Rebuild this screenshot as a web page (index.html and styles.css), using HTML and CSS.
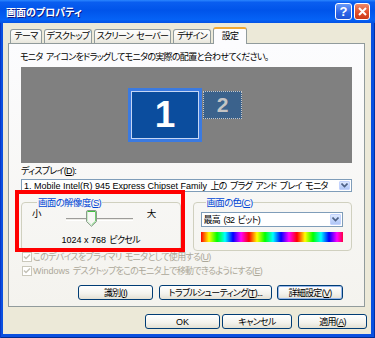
FILE: index.html
```html
<!DOCTYPE html>
<html>
    <head>
        <meta charset="utf-8">
        <title>画面のプロパティ</title>
        <link rel="stylesheet" href="styles.css">
    </head>
    <body>
        <div id="window">
            <div id="titleBar">
                <span class="title">画面のプロパティ</span>
                <span class="titleBtn help">?</span>
                <span class="titleBtn close">
                    <svg width="9" height="9" viewBox="0 0 9 9"><path d="M1 1L8 8M8 1L1 8" stroke="#fff" stroke-width="2"/></svg>
                </span>
            </div>
            <div id="client">
                <ul id="tabs">
                    <li class="t1">テーマ</li>
                    <li class="t2">デスクトップ</li>
                    <li class="t3">スクリーン セーバー</li>
                    <li class="t4">デザイン</li>
                    <li class="t5 active">設定</li>
                </ul>
                <div id="panel">
                    <p class="hint">モニタ アイコンをドラッグしてモニタの実際の配置と合わせてください。</p>
                    <div id="monitors">
                        <div class="monitor one"><span>1</span></div>
                        <div class="monitor two"><span>2</span></div>
                    </div>
                    <p class="label">ディスプレイ(<u>D</u>):</p>
                    <div class="combo display">
                        <span class="value"><span class="en">1. Mobile Intel(R) 945 Express Chipset Family</span> 上の プラグ アンド プレイ モニタ</span>
                        <span class="arrow"><svg width="7" height="5" viewBox="0 0 7 5"><path d="M0.5 0.5L3.5 3.5L6.5 0.5" fill="none" stroke="#4d6185" stroke-width="1.6"/></svg></span>
                    </div>
                    <div id="groups">
                        <fieldset class="group res">
                            <legend>画面の解像度(<u>S</u>)</legend>
                            <div class="sliderRow">
                                <span class="end">小</span>
                                <div class="slider">
                                    <div class="track"></div>
                                    <svg class="thumb" width="11" height="17" viewBox="0 0 11 17">
                                        <path d="M0.5 2Q0.5 0.5 2 0.5H9Q10.5 0.5 10.5 2V11.5L5.5 16.3L0.5 11.5Z" fill="#f7f7f4" stroke="#8a9a8a"/>
                                        <path d="M1.5 1.5H9.5" stroke="#3fbf3f"/>
                                        <path d="M9.5 2V11.2L5.5 15" fill="none" stroke="#6fcf6f"/>
                                        <path d="M1.5 2V11.2L5.5 15" fill="none" stroke="#c8eec8"/>
                                    </svg>
                                </div>
                                <span class="end">大</span>
                            </div>
                            <p class="resText"><span class="en">1024 x 768</span> ピクセル</p>
                        </fieldset>
                        <fieldset class="group color">
                            <legend>画面の色(<u>C</u>)</legend>
                            <div class="combo colorDepth">
                                <span class="value">最高 (32 ビット)</span>
                                <span class="arrow"><svg width="7" height="5" viewBox="0 0 7 5"><path d="M0.5 0.5L3.5 3.5L6.5 0.5" fill="none" stroke="#4d6185" stroke-width="1.6"/></svg></span>
                            </div>
                            <div class="rainbow"></div>
                        </fieldset>
                    </div>
                    <div class="check">
                        <span class="box"><svg width="8" height="8" viewBox="0 0 8 8"><path d="M1 3.5L3 5.5L7 1.5" fill="none" stroke="#c4c2b6" stroke-width="1.5"/></svg></span>
                        <span>このデバイスをプライマリ モニタとして使用する(<u>U</u>)</span>
                    </div>
                    <div class="check second">
                        <span class="box"><svg width="8" height="8" viewBox="0 0 8 8"><path d="M1 3.5L3 5.5L7 1.5" fill="none" stroke="#c4c2b6" stroke-width="1.5"/></svg></span>
                        <span><span class="en">Windows</span> デスクトップをこのモニタ上で移動できるようにする(<u>E</u>)</span>
                    </div>
                    <div class="buttons panelButtons">
                        <button class="b1">識別(<u>I</u>)</button>
                        <button class="b2">トラブルシューティング(<u>T</u>)...</button>
                        <button class="b3 focus">詳細設定(<u>V</u>)</button>
                    </div>
                </div>
                <div class="buttons dialogButtons">
                    <button class="ok"><span class="en">OK</span></button>
                    <button class="cancel">キャンセル</button>
                    <button class="apply">適用(<u>A</u>)</button>
                </div>
            </div>
            <div id="mark"></div>
        </div>
    </body>
</html>
```

FILE: styles.css
```css
*{
    margin: 0px;
    padding: 0px;
    box-sizing: border-box;
}
body{
    width: 375px;
    height: 338px;
    overflow: hidden;
    font-family: "Liberation Sans", "Noto Sans CJK JP", sans-serif;
    font-size: 9px;
    font-feature-settings: "palt";
    letter-spacing: -0.7px;
    word-spacing: 1.5px;
    white-space: nowrap;
    color: #000;
}
.en{
    letter-spacing: 0px;
    word-spacing: 0px;
}
#window{
    position: relative;
    width: 375px;
    height: 338px;
    display: flex;
    flex-direction: column;
    background-color: #0a50e0;
    box-shadow: inset 1px 0 #0838c8, inset -1px 0 #0030a8, inset 0 -1px #002a90;
}
#titleBar{
    height: 23px;
    display: flex;
    align-items: center;
    padding: 0 5px 0 6px;
    background: linear-gradient(180deg, #2b86ff 0, #0a5ef0 10%, #0054ea 45%, #0562f6 85%, #0452e4 100%);
}
#titleBar .title{
    flex: 1;
    color: #fff;
    font-size: 10px;
    font-weight: bold;
    letter-spacing: 0px;
    text-shadow: 1px 1px #0a1883;
}
.titleBtn{
    width: 17px;
    height: 17px;
    margin-left: 2px;
    border: 1px solid #fff;
    border-radius: 3px;
    display: flex;
    align-items: center;
    justify-content: center;
    color: #fff;
}
.titleBtn.help{
    background: linear-gradient(180deg, #6a9bf8, #2b63e6 60%, #1f55d6);
    font-size: 13px;
    font-weight: bold;
    letter-spacing: 0px;
}
.titleBtn.close{
    width: 16px;
    background: linear-gradient(180deg, #f08a6a, #e0502c 55%, #cc3a18);
}
#client{
    flex: 1;
    margin: 0 4px 4px 3px;
    padding-top: 4px;
    background-color: #ece9d8;
    display: flex;
    flex-direction: column;
}
#tabs{
    list-style: none;
    display: flex;
    align-items: flex-end;
    height: 16px;
    padding-left: 7px;
    position: relative;
    z-index: 1;
}
#tabs li{
    height: 14px;
    margin-right: 2px;
    border: 1px solid #919b9c;
    border-bottom: none;
    border-radius: 3px 3px 0 0;
    background: linear-gradient(180deg, #fefefe, #f4f3ee 60%, #e8e6dc);
    text-align: center;
    line-height: 13px;
    overflow: hidden;
}
#tabs li.active{
    height: 17px;
    margin-bottom: -1px;
    border-top: 2px solid #f0a832;
    background: #fcfcfe;
    line-height: 14px;
}
#tabs .t1{ width: 32px; }
#tabs .t2{ width: 48px; }
#tabs .t3{ width: 77px; }
#tabs .t4{ width: 38px; }
#tabs .t5{ width: 34px; }
#panel{
    height: 264px;
    margin: 0 6px 0 5px;
    padding: 7px 12px 0;
    border: 1px solid #919b9c;
    background: linear-gradient(180deg, #fcfcfe, #f4f3ee);
}
.hint{
    line-height: 12px;
    margin-left: -1px;
}
#monitors{
    position: relative;
    height: 96px;
    margin-top: 4px;
    background-color: #808080;
}
.monitor{
    position: absolute;
    display: flex;
    align-items: center;
    justify-content: center;
    font-weight: bold;
    letter-spacing: 0px;
}
.monitor.one{
    left: 107px;
    top: 21px;
    width: 74px;
    height: 54px;
    border: 3px solid #3b7ae0;
    background-color: #0b4d9e;
    box-shadow: inset 0 0 0 1px #c6d6f4;
    color: #fff;
    font-size: 37px;
}
.monitor.two{
    left: 182px;
    top: 24px;
    width: 39px;
    height: 28px;
    border: 1px dotted #c8c8c8;
    background-color: #3b628c;
    color: #c4c4c4;
    font-size: 21px;
}
.label{
    margin-top: 2px;
    line-height: 12px;
}
.combo{
    display: flex;
    align-items: center;
    border: 1px solid #7f9db9;
    background-color: #fff;
    padding: 0 1px 0 2px;
}
.combo .value{
    flex: 1;
    overflow: hidden;
}
.combo .arrow{
    width: 11px;
    height: 100%;
    display: flex;
    align-items: center;
    justify-content: center;
    border-radius: 1px;
    background: linear-gradient(180deg, #dde8fe, #c0d3fb 60%, #b0c6f6);
    border: 1px solid #c3d3fd;
}
.combo.display{
    height: 13px;
    margin-top: 2px;
    padding-top: 1px;
    padding-bottom: 1px;
}
#groups{
    display: grid;
    grid-template-columns: 1fr 1fr;
    column-gap: 12px;
    height: 54px;
    margin-top: 5px;
}
.group{
    border: 1px solid #d0d0bf;
    border-radius: 4px;
    min-width: 0;
}
.group legend{
    margin-left: 5px;
    padding: 0 1px;
    color: #0046d5;
    font-size: 9.5px;
    line-height: 11px;
}
.group.res{
    padding: 0 6px 0 10px;
}
.sliderRow{
    display: flex;
    height: 19px;
    margin-top: 1px;
}
.sliderRow .end{
    line-height: 10px;
    font-size: 9.5px;
}
.slider{
    position: relative;
    width: 67px;
    margin: 0 14px 0 25px;
}
.slider .track{
    margin-top: 9px;
    height: 3px;
    border-top: 1px solid #9d9c99;
    border-bottom: 1px solid #fff;
    background-color: #ecebe6;
}
.slider .thumb{
    position: absolute;
    left: 20px;
    top: 1px;
}
.resText{
    margin-top: 6px;
    line-height: 12px;
    text-align: center;
    padding-right: 4px;
}
.group.color{
    padding: 0 8px 0 7px;
}
.combo.colorDepth{
    height: 15px;
    margin-top: 4px;
    padding-top: 1px;
    padding-bottom: 1px;
}
.rainbow{
    height: 10px;
    margin-top: 5px;
    background: repeating-linear-gradient(90deg, #f00 0, #ff0 8px, #0f0 16px, #0ff 24px, #00f 32px, #f0f 40px, #f00 48px);
}
.check{
    display: flex;
    align-items: center;
    line-height: 12px;
    margin-left: 1px;
    color: #aca899;
}
.check.second{
    margin-top: 2px;
}
.check .box{
    width: 10px;
    height: 10px;
    margin-right: 1px;
    border: 1px solid #cac8bb;
    background-color: #fff;
    display: flex;
    align-items: center;
    justify-content: center;
}
.buttons{
    display: flex;
    justify-content: flex-end;
}
.buttons button{
    height: 15px;
    border: 1px solid #003c74;
    border-radius: 3px;
    background: linear-gradient(180deg, #fff, #f3f2ec 60%, #e3e0d3);
    font-family: inherit;
    font-size: 9px;
    font-feature-settings: "palt";
    letter-spacing: -0.7px;
    white-space: nowrap;
    color: #000;
}
.panelButtons{
    margin-top: 8px;
    padding-right: 9px;
}
.panelButtons button{
    margin-left: 5px;
}
.panelButtons .b1{ width: 75px; }
.panelButtons .b2{ width: 113px; margin-left: 6px; }
.panelButtons .b3{ width: 66px; }
.buttons button.focus{
    box-shadow: inset 0 0 0 1px #98b8ea;
}
.dialogButtons{
    margin-top: 7px;
    padding-right: 4px;
}
.dialogButtons .ok{ width: 75px; }
.dialogButtons .cancel{ width: 70px; margin-left: 2px; }
.dialogButtons .apply{ width: 69px; margin-left: 6px; }
#mark{
    position: absolute;
    left: 15px;
    top: 190px;
    width: 170px;
    height: 62px;
    border: 4px solid #f00;
}
```
